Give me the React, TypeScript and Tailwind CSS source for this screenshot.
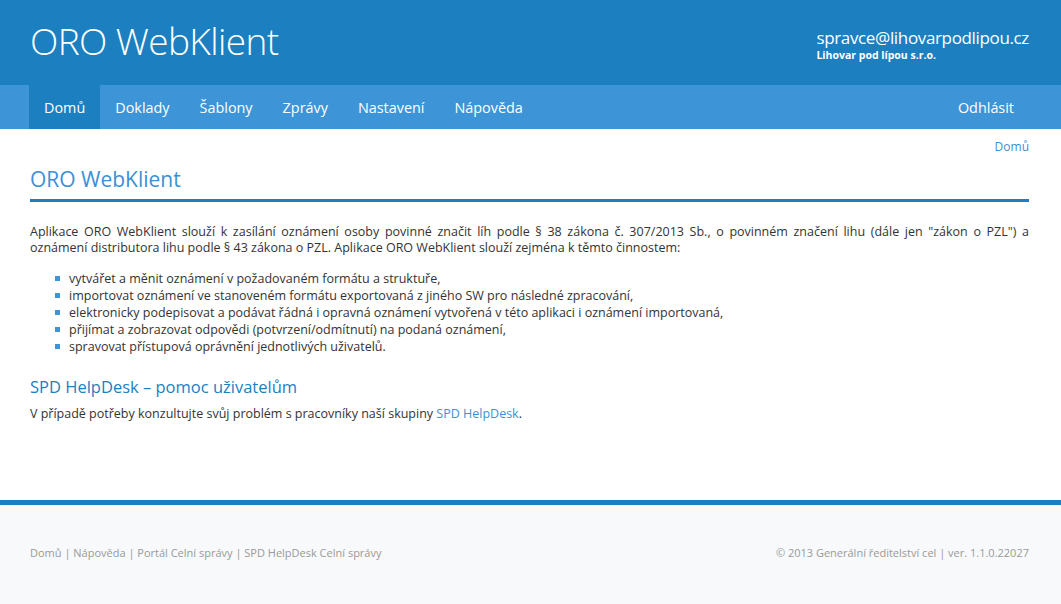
import React from "react";

const navItems = ["Domů", "Doklady", "Šablony", "Zprávy", "Nastavení", "Nápověda"];
const listItems = [
  "vytvářet a měnit oznámení v požadovaném formátu a struktuře,",
  "importovat oznámení ve stanoveném formátu exportovaná z jiného SW pro následné zpracování,",
  "elektronicky podepisovat a podávat řádná i opravná oznámení vytvořená v této aplikaci i oznámení importovaná,",
  "přijímat a zobrazovat odpovědi (potvrzení/odmítnutí) na podaná oznámení,",
  "spravovat přístupová oprávnění jednotlivých uživatelů.",
];

export default function App() {
  return (
    <div className="min-h-[604px] flex flex-col bg-white text-[#333] [font-family:'Open_Sans',sans-serif]">
      <header className="bg-[#1b7fc0] h-[85px]">
        <div className="ml-[30px] mr-[32px] flex justify-between items-start">
          <div className="pt-[18px] text-[37px] leading-[46px] font-light text-white tracking-[-0.6px]">ORO WebKlient</div>
          <div className="pt-[27px] text-white">
            <div className="text-[17px] leading-[21px] tracking-[-0.35px]">spravce@lihovarpodlipou.cz</div>
            <div className="text-[10.5px] leading-[14px] font-bold">Lihovar pod lípou s.r.o.</div>
          </div>
        </div>
      </header>
      <nav className="bg-[#3d94d6] h-[44px]">
        <div className="ml-[29px] mr-[32px] flex h-full justify-between">
          <ul className="flex h-full">
            {navItems.map((n, i) => (
              <li
                key={n}
                className={`px-[15px] pt-[2px] h-full flex items-center text-[14.4px] text-white ${i === 0 ? "bg-[#1b7fc0]" : ""}`}
              >
                {n}
              </li>
            ))}
          </ul>
          <div className="px-[15px] pt-[2px] h-full flex items-center text-[14.4px] text-white">Odhlásit</div>
        </div>
      </nav>
      <main className="flex-1 ml-[30px] mr-[32px] pb-[70px]">
        <div className="text-right text-[12px] leading-[16px] mt-[10px] text-[#3d8fd0]">Domů</div>
        <h1 className="text-[21px] leading-[28px] text-[#3d8fd6] mt-[10px] pb-[6px] border-b-[3px] border-[#1b7fc0]">ORO WebKlient</h1>
        <div className="mt-[22px] text-[12.5px] leading-[16px]">
          <p className="text-justify [text-align-last:justify]">
            Aplikace ORO WebKlient slouží k zasílání oznámení osoby povinné značit líh podle § 38 zákona č. 307/2013 Sb., o povinném značení lihu (dále jen "zákon o PZL") a
          </p>
          <p>oznámení distributora lihu podle § 43 zákona o PZL. Aplikace ORO WebKlient slouží zejména k těmto činnostem:</p>
        </div>
        <ul className="mt-[14px] pl-[25px]">
          {listItems.map((t) => (
            <li key={t} className="flex items-center text-[12.5px] leading-[17px]">
              <span className="w-[5px] h-[5px] bg-[#3d94d6] mr-[9px] shrink-0" />
              {t}
            </li>
          ))}
        </ul>
        <h2 className="mt-[20px] text-[16.5px] leading-[24px] text-[#1b7fc0]">SPD HelpDesk – pomoc uživatelům</h2>
        <p className="mt-[7px] text-[12.5px] leading-[16px]">
          V případě potřeby konzultujte svůj problém s pracovníky naší skupiny <span className="text-[#3d8fd6]">SPD HelpDesk</span>.
        </p>
      </main>
      <footer className="border-t-[5px] border-[#1b7fc0] bg-[#f7f9fb] h-[104px]">
        <div className="ml-[30px] mr-[32px] flex justify-between pt-[40px] text-[11px] leading-[16px] text-[#999]">
          <div>Domů | Nápověda | Portál Celní správy | SPD HelpDesk Celní správy</div>
          <div>© 2013 Generální ředitelství cel | ver. 1.1.0.22027</div>
        </div>
      </footer>
    </div>
  );
}
